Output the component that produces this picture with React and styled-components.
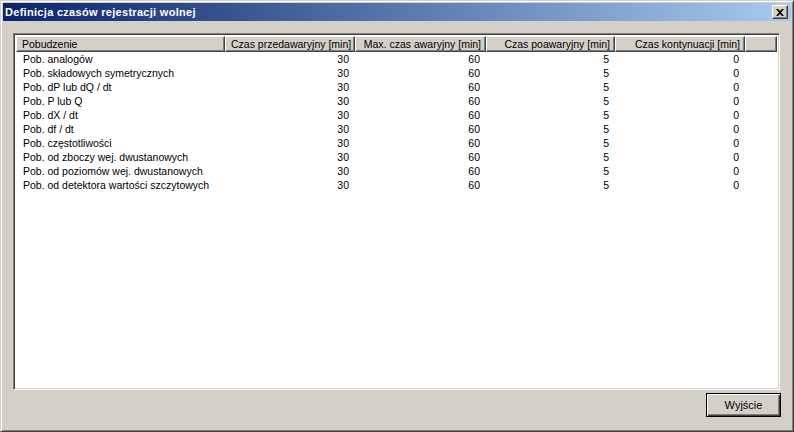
import React from 'react';
import styled, { createGlobalStyle } from 'styled-components';

const GlobalStyle = createGlobalStyle`
  html, body {
    margin: 0;
    padding: 0;
    background: #d4d0c8;
  }
  * {
    box-sizing: border-box;
  }
`;

const Window = styled.div`
  width: 794px;
  height: 432px;
  display: flex;
  flex-direction: column;
  background: #d4d0c8;
  border: 1px solid;
  border-color: #d4d0c8 #404040 #404040 #d4d0c8;
  box-shadow: inset 1px 1px 0 #ffffff, inset -1px -1px 0 #808080;
  padding: 2px;
  font-family: 'Liberation Sans', Arial, sans-serif;
  font-size: 10.5px;
  color: #000;
`;

const TitleBar = styled.div`
  height: 18px;
  display: flex;
  align-items: center;
  justify-content: space-between;
  padding: 0 3px 0 2px;
  background: linear-gradient(to right, #0a246a, #a6caf0);
`;

const Title = styled.span`
  color: #fff;
  font-weight: bold;
  font-size: 11px;
  letter-spacing: 0.3px;
`;

const CloseButton = styled.div`
  width: 16px;
  height: 14px;
  display: flex;
  align-items: center;
  justify-content: center;
  background: #d4d0c8;
  border: 1px solid;
  border-color: #ffffff #404040 #404040 #ffffff;
  box-shadow: inset -1px -1px 0 #808080;
`;

const Content = styled.div`
  flex: 1;
  display: flex;
  flex-direction: column;
  padding: 12px 11px 0 10px;
`;

const ListView = styled.div`
  height: 357px;
  display: flex;
  flex-direction: column;
  background: #fff;
  border: 1px solid;
  border-color: #808080 #ffffff #ffffff #808080;
  box-shadow: inset 1px 1px 0 #404040, inset -1px -1px 0 #d4d0c8;
  padding: 2px;
`;

const HeaderRow = styled.div`
  display: flex;
  height: 16px;
`;

const HeaderCell = styled.div`
  width: ${p => p.$w}px;
  flex: ${p => (p.$grow ? 1 : 'none')};
  height: 16px;
  line-height: 14px;
  background: #d4d0c8;
  border: 1px solid;
  border-color: #ffffff #404040 #404040 #ffffff;
  box-shadow: inset -1px -1px 0 #808080;
  padding: 0 4px 0 5px;
  text-align: ${p => p.$align || 'left'};
  white-space: nowrap;
  overflow: hidden;
`;

const Row = styled.div`
  display: flex;
  height: 14px;
  line-height: 14px;
`;

const Cell = styled.div`
  width: ${p => p.$w}px;
  padding: 0 6px 0 7px;
  text-align: ${p => p.$align || 'left'};
  white-space: nowrap;
`;

const Footer = styled.div`
  display: flex;
  justify-content: flex-end;
  padding-top: 3px;
`;

const Button = styled.button`
  width: 75px;
  height: 24px;
  margin-right: -1px;
  font-family: 'Liberation Sans', Arial, sans-serif;
  font-size: 11px;
  color: #000;
  background: #d4d0c8;
  border: 1px solid #000;
  box-shadow: inset 1px 1px 0 #ffffff, inset -1px -1px 0 #404040, inset -2px -2px 0 #808080;
  padding: 0;
`;

const columns = [
  { label: 'Pobudzenie', w: 209, align: 'left' },
  { label: 'Czas przedawaryjny [min]', w: 130, align: 'right' },
  { label: 'Max. czas awaryjny [min]', w: 131, align: 'right' },
  { label: 'Czas poawaryjny [min]', w: 129, align: 'right' },
  { label: 'Czas kontynuacji [min]', w: 130, align: 'right' },
];

const rows = [
  'Pob. analogów',
  'Pob. składowych symetrycznych',
  'Pob. dP lub dQ / dt',
  'Pob. P lub Q',
  'Pob. dX / dt',
  'Pob. df / dt',
  'Pob. częstotliwości',
  'Pob. od zboczy wej. dwustanowych',
  'Pob. od poziomów wej. dwustanowych',
  'Pob. od detektora wartości szczytowych',
];

const App = () => (
  <>
    <GlobalStyle />
    <Window>
      <TitleBar>
        <Title>Definicja czasów rejestracji wolnej</Title>
        <CloseButton>
          <svg width="8" height="7" viewBox="0 0 8 7">
            <path d="M0 0h2l2 2 2-2h2L5 3.5 8 7H6L4 5 2 7H0l3-3.5z" fill="#000" />
          </svg>
        </CloseButton>
      </TitleBar>
      <Content>
        <ListView>
          <HeaderRow>
            {columns.map(c => (
              <HeaderCell key={c.label} $w={c.w} $align={c.align}>
                {c.label}
              </HeaderCell>
            ))}
            <HeaderCell $grow />
          </HeaderRow>
          {rows.map(name => (
            <Row key={name}>
              <Cell $w={209}>{name}</Cell>
              <Cell $w={130} $align="right">30</Cell>
              <Cell $w={131} $align="right">60</Cell>
              <Cell $w={129} $align="right">5</Cell>
              <Cell $w={130} $align="right">0</Cell>
            </Row>
          ))}
        </ListView>
        <Footer>
          <Button>Wyjście</Button>
        </Footer>
      </Content>
    </Window>
  </>
);

export default App;
